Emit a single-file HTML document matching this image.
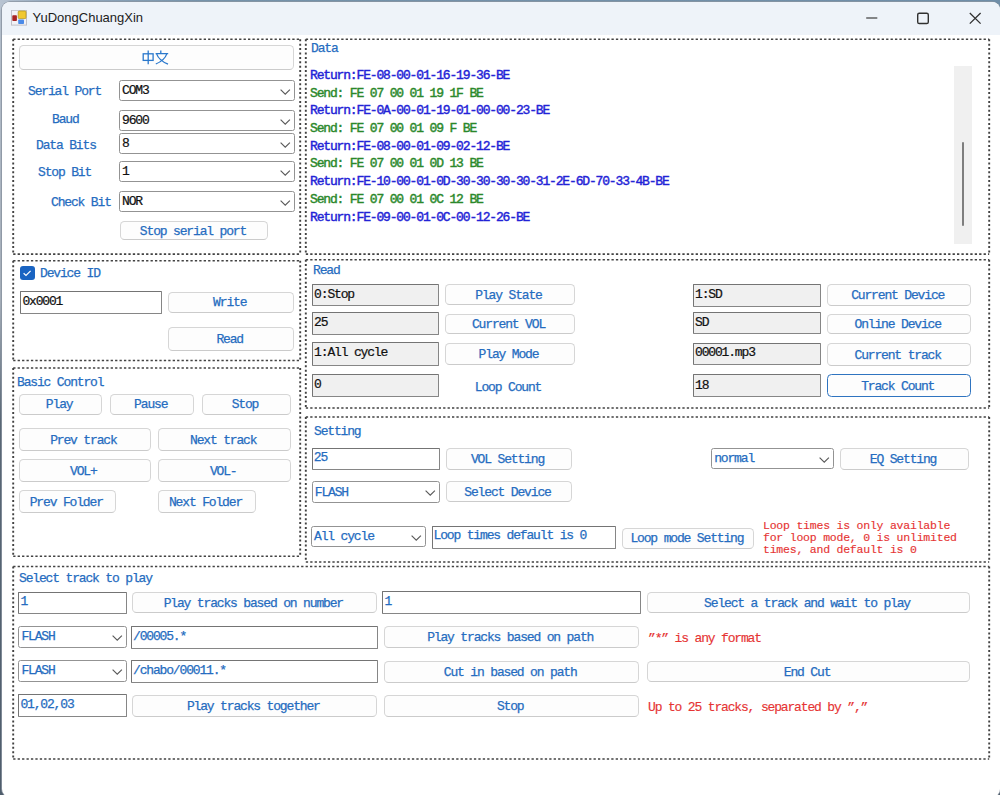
<!DOCTYPE html>
<html><head><meta charset="utf-8"><style>
html,body{margin:0;padding:0;width:1000px;height:795px;overflow:hidden;background:linear-gradient(180deg,#b4bfcc 0,#a4adb8 300px,#5a6876 420px,#4f5d6c 795px);}
#topbg{position:absolute;left:0;top:0;width:1000px;height:10px;background:linear-gradient(90deg,#b8c4d2 0,#98acc0 40px,#7592aa 200px,#6f8ea8 100%);}
#win{position:absolute;left:1.6px;top:1.8px;width:998.4px;height:795.2px;background:#fff;border-radius:8px;overflow:hidden;box-shadow:0 0 0 0.8px #8a94a0;}
#title{position:absolute;left:0;top:0;width:100%;height:33.4px;background:#eef3f9;}
.t{position:absolute;white-space:pre;line-height:20px;height:20px;}
.b{position:absolute;box-sizing:border-box;border:1.5px solid #d6d6d6;border-bottom-color:#cbcbcb;border-radius:4.5px;background:#fdfdfd;}
.b.f{border:1.5px solid #2f74c0;}
.c{position:absolute;box-sizing:border-box;border:1.5px solid #939393;border-radius:2.5px;background:#fff;}
.x{position:absolute;box-sizing:border-box;border:1.5px solid #868686;border-top-color:#747474;border-left-color:#747474;border-radius:1px;}
.chev{position:absolute;}
.chk{position:absolute;width:14.4px;height:13.7px;background:#1a64c2;border-radius:3px;}
</style></head><body>
<div id="topbg"></div>
<div id="win">
 <div id="title"></div>
</div>
<div style="position:absolute;left:0;top:0;width:1000px;height:795px">
<svg style="position:absolute;left:11px;top:10px" width="16" height="16">
 <rect x="0.5" y="0.3" width="15" height="14.8" fill="#f2f2f6" stroke="#c0c0c8"/>
 <rect x="1.3" y="5.2" width="4.6" height="5.8" rx="0.8" fill="#a82424"/>
 <rect x="7.2" y="1" width="7.8" height="7.6" rx="1" fill="#f0c830" stroke="#b89820" stroke-width="0.8"/>
 <rect x="7.2" y="9.6" width="5.8" height="4.4" rx="0.8" fill="#4a8ae8"/>
</svg>
<div class="t" style="left:32.5px;top:8px;font-family:'Liberation Sans',sans-serif;font-size:13px;color:#1c1c1c;">YuDongChuangXin</div>
<svg style="position:absolute;left:865px;top:10px" width="120" height="18">
 <path d="M1.2 8 H12.3" stroke="#4a4a4a" stroke-width="1.3"/>
 <rect x="52.7" y="3.2" width="10.6" height="10.3" rx="1.6" fill="none" stroke="#303030" stroke-width="1.4"/>
 <path d="M104.8 3 L115.6 13.6 M115.6 3 L104.8 13.6" stroke="#303030" stroke-width="1.3"/>
</svg>
<svg style="position:absolute;left:0;top:0" width="1000" height="795"><g fill="none" stroke="#424242" stroke-width="1.55" stroke-dasharray="2.3 2.13"><path d="M13.2 39.3 H300.2 M13.2 254.1 H300.2"/><path d="M305.8 39.3 H989.2 M305.8 254.1 H989.2"/><path d="M13.2 260.8 H300.2 M13.2 360.4 H300.2"/><path d="M305.8 259.7 H989.2 M305.8 408 H989.2"/><path d="M13.2 368 H300.2 M13.2 556.3 H300.2"/><path d="M305.8 417 H989.2 M305.8 562 H989.2"/><path d="M13.2 566.4 H989.2 M13.2 759 H989.2"/></g><g fill="none" stroke="#424242" stroke-width="1.9" stroke-dasharray="2.0 2.4"><path d="M13.2 39.3 V254.1 M300.2 39.3 V254.1"/><path d="M305.8 39.3 V254.1 M989.2 39.3 V254.1"/><path d="M13.2 260.8 V360.4 M300.2 260.8 V360.4"/><path d="M305.8 259.7 V408 M989.2 259.7 V408"/><path d="M13.2 368 V556.3 M300.2 368 V556.3"/><path d="M305.8 417 V562 M989.2 417 V562"/><path d="M13.2 566.4 V759 M989.2 566.4 V759"/></g></svg>
<div class="b" style="left:19px;top:45.2px;width:275px;height:24.89999999999999px"></div>
<div class="t" style="top:48.87px;font-size:13.0px;letter-spacing:-1.16px;color:#256cc0;font-family:'Liberation Mono',monospace;-webkit-text-stroke:0.25px #256cc0;left:-144.80px;width:600px;text-align:center;"></div>
<div class="c" style="left:119px;top:80px;width:176px;height:21.400000000000006px"></div>
<svg class="chev" style="left:280px;top:89.10000000000001px" width="11" height="7"><path d="M0.6 0.6 L5.25 5.25 L9.9 0.6" fill="none" stroke="#5a5a5a" stroke-width="1.15"/></svg>
<div class="t" style="top:81.12px;font-size:13.0px;letter-spacing:-1.16px;color:#111;font-family:'Liberation Mono',monospace;-webkit-text-stroke:0.22px #111;left:122.00px;">COM3</div>
<div class="c" style="left:119px;top:110px;width:176px;height:21px"></div>
<svg class="chev" style="left:280px;top:118.9px" width="11" height="7"><path d="M0.6 0.6 L5.25 5.25 L9.9 0.6" fill="none" stroke="#5a5a5a" stroke-width="1.15"/></svg>
<div class="t" style="top:110.92px;font-size:13.0px;letter-spacing:-1.16px;color:#111;font-family:'Liberation Mono',monospace;-webkit-text-stroke:0.22px #111;left:122.00px;">9600</div>
<div class="c" style="left:119px;top:133px;width:176px;height:21px"></div>
<svg class="chev" style="left:280px;top:141.9px" width="11" height="7"><path d="M0.6 0.6 L5.25 5.25 L9.9 0.6" fill="none" stroke="#5a5a5a" stroke-width="1.15"/></svg>
<div class="t" style="top:133.92px;font-size:13.0px;letter-spacing:-1.16px;color:#111;font-family:'Liberation Mono',monospace;-webkit-text-stroke:0.22px #111;left:122.00px;">8</div>
<div class="c" style="left:119px;top:161px;width:176px;height:21px"></div>
<svg class="chev" style="left:280px;top:169.9px" width="11" height="7"><path d="M0.6 0.6 L5.25 5.25 L9.9 0.6" fill="none" stroke="#5a5a5a" stroke-width="1.15"/></svg>
<div class="t" style="top:161.92px;font-size:13.0px;letter-spacing:-1.16px;color:#111;font-family:'Liberation Mono',monospace;-webkit-text-stroke:0.22px #111;left:122.00px;">1</div>
<div class="c" style="left:119px;top:191px;width:176px;height:21px"></div>
<svg class="chev" style="left:280px;top:199.9px" width="11" height="7"><path d="M0.6 0.6 L5.25 5.25 L9.9 0.6" fill="none" stroke="#5a5a5a" stroke-width="1.15"/></svg>
<div class="t" style="top:191.92px;font-size:13.0px;letter-spacing:-1.16px;color:#111;font-family:'Liberation Mono',monospace;-webkit-text-stroke:0.22px #111;left:122.00px;">NOR</div>
<div class="t" style="top:81.62px;font-size:13.0px;letter-spacing:-1.16px;color:#256cc0;font-family:'Liberation Mono',monospace;-webkit-text-stroke:0.25px #256cc0;left:28.00px;">Serial Port</div>
<div class="t" style="top:109.62px;font-size:13.0px;letter-spacing:-1.16px;color:#256cc0;font-family:'Liberation Mono',monospace;-webkit-text-stroke:0.25px #256cc0;left:52.00px;">Baud</div>
<div class="t" style="top:135.62px;font-size:13.0px;letter-spacing:-1.16px;color:#256cc0;font-family:'Liberation Mono',monospace;-webkit-text-stroke:0.25px #256cc0;left:36.00px;">Data Bits</div>
<div class="t" style="top:162.62px;font-size:13.0px;letter-spacing:-1.16px;color:#256cc0;font-family:'Liberation Mono',monospace;-webkit-text-stroke:0.25px #256cc0;left:38.00px;">Stop Bit</div>
<div class="t" style="top:192.62px;font-size:13.0px;letter-spacing:-1.16px;color:#256cc0;font-family:'Liberation Mono',monospace;-webkit-text-stroke:0.25px #256cc0;left:51.00px;">Check Bit</div>
<div class="b" style="left:120.4px;top:220.8px;width:147.79999999999998px;height:19.19999999999999px"></div>
<div class="t" style="top:221.62px;font-size:13.0px;letter-spacing:-1.16px;color:#256cc0;font-family:'Liberation Mono',monospace;-webkit-text-stroke:0.25px #256cc0;left:-107.00px;width:600px;text-align:center;">Stop serial port</div>
<div class="t" style="top:38.62px;font-size:13.0px;letter-spacing:-1.16px;color:#256cc0;font-family:'Liberation Mono',monospace;-webkit-text-stroke:0.25px #256cc0;left:311.00px;">Data</div>
<div class="t" style="top:65.82px;font-size:13.0px;letter-spacing:-1.16px;color:#2222d6;font-family:'Liberation Mono',monospace;-webkit-text-stroke:0.42px #2222d6;left:310.00px;">Return:FE-08-00-01-16-19-36-BE</div>
<div class="t" style="top:83.54px;font-size:13.0px;letter-spacing:-1.16px;color:#2a882a;font-family:'Liberation Mono',monospace;-webkit-text-stroke:0.42px #2a882a;left:310.00px;">Send: FE 07 00 01 19 1F BE</div>
<div class="t" style="top:101.26px;font-size:13.0px;letter-spacing:-1.16px;color:#2222d6;font-family:'Liberation Mono',monospace;-webkit-text-stroke:0.42px #2222d6;left:310.00px;">Return:FE-0A-00-01-19-01-00-00-23-BE</div>
<div class="t" style="top:118.98px;font-size:13.0px;letter-spacing:-1.16px;color:#2a882a;font-family:'Liberation Mono',monospace;-webkit-text-stroke:0.42px #2a882a;left:310.00px;">Send: FE 07 00 01 09 F BE</div>
<div class="t" style="top:136.70px;font-size:13.0px;letter-spacing:-1.16px;color:#2222d6;font-family:'Liberation Mono',monospace;-webkit-text-stroke:0.42px #2222d6;left:310.00px;">Return:FE-08-00-01-09-02-12-BE</div>
<div class="t" style="top:154.42px;font-size:13.0px;letter-spacing:-1.16px;color:#2a882a;font-family:'Liberation Mono',monospace;-webkit-text-stroke:0.42px #2a882a;left:310.00px;">Send: FE 07 00 01 0D 13 BE</div>
<div class="t" style="top:172.14px;font-size:13.0px;letter-spacing:-1.16px;color:#2222d6;font-family:'Liberation Mono',monospace;-webkit-text-stroke:0.42px #2222d6;left:310.00px;">Return:FE-10-00-01-0D-30-30-30-30-31-2E-6D-70-33-4B-BE</div>
<div class="t" style="top:189.86px;font-size:13.0px;letter-spacing:-1.16px;color:#2a882a;font-family:'Liberation Mono',monospace;-webkit-text-stroke:0.42px #2a882a;left:310.00px;">Send: FE 07 00 01 0C 12 BE</div>
<div class="t" style="top:207.58px;font-size:13.0px;letter-spacing:-1.16px;color:#2222d6;font-family:'Liberation Mono',monospace;-webkit-text-stroke:0.42px #2222d6;left:310.00px;">Return:FE-09-00-01-0C-00-12-26-BE</div>
<div style="position:absolute;left:954px;top:65.6px;width:18px;height:178px;background:#f0f0f0"></div>
<div style="position:absolute;left:962px;top:141.8px;width:2.4px;height:84.2px;background:#7e7e7e;border-radius:1.2px"></div>
<div class="chk" style="left:20.4px;top:266.3px"></div>
<svg style="position:absolute;left:20.4px;top:266.3px" width="14" height="14"><path d="M3.6 7.2 L6 9.4 L10.6 4.8" fill="none" stroke="#fff" stroke-width="1.2"/></svg>
<div class="t" style="top:263.62px;font-size:13.0px;letter-spacing:-1.16px;color:#256cc0;font-family:'Liberation Mono',monospace;-webkit-text-stroke:0.25px #256cc0;left:40.00px;">Device ID</div>
<div class="x" style="left:20.4px;top:291.3px;width:141.29999999999998px;height:23.0px;background:#fff"></div>
<div class="t" style="top:291.82px;font-size:13.0px;letter-spacing:-1.16px;color:#111;font-family:'Liberation Mono',monospace;-webkit-text-stroke:0.22px #111;left:22.40px;">0x0001</div>
<div class="b" style="left:168px;top:291.5px;width:126px;height:21.5px"></div>
<div class="t" style="top:293.47px;font-size:13.0px;letter-spacing:-1.16px;color:#256cc0;font-family:'Liberation Mono',monospace;-webkit-text-stroke:0.25px #256cc0;left:-70.30px;width:600px;text-align:center;">Write</div>
<div class="b" style="left:168px;top:327px;width:126px;height:23.5px"></div>
<div class="t" style="top:329.97px;font-size:13.0px;letter-spacing:-1.16px;color:#256cc0;font-family:'Liberation Mono',monospace;-webkit-text-stroke:0.25px #256cc0;left:-70.30px;width:600px;text-align:center;">Read</div>
<div class="t" style="top:372.62px;font-size:13.0px;letter-spacing:-1.16px;color:#256cc0;font-family:'Liberation Mono',monospace;-webkit-text-stroke:0.25px #256cc0;left:17.00px;">Basic Control</div>
<div class="b" style="left:18.7px;top:393.5px;width:83.5px;height:21.0px"></div>
<div class="t" style="top:395.22px;font-size:13.0px;letter-spacing:-1.16px;color:#256cc0;font-family:'Liberation Mono',monospace;-webkit-text-stroke:0.25px #256cc0;left:-240.85px;width:600px;text-align:center;">Play</div>
<div class="b" style="left:110px;top:393.5px;width:84px;height:21.0px"></div>
<div class="t" style="top:395.22px;font-size:13.0px;letter-spacing:-1.16px;color:#256cc0;font-family:'Liberation Mono',monospace;-webkit-text-stroke:0.25px #256cc0;left:-149.30px;width:600px;text-align:center;">Pause</div>
<div class="b" style="left:202px;top:393.5px;width:88.5px;height:21.0px"></div>
<div class="t" style="top:395.22px;font-size:13.0px;letter-spacing:-1.16px;color:#256cc0;font-family:'Liberation Mono',monospace;-webkit-text-stroke:0.25px #256cc0;left:-55.05px;width:600px;text-align:center;">Stop</div>
<div class="b" style="left:18.7px;top:428.1px;width:131.9px;height:23.19999999999999px"></div>
<div class="t" style="top:430.92px;font-size:13.0px;letter-spacing:-1.16px;color:#256cc0;font-family:'Liberation Mono',monospace;-webkit-text-stroke:0.25px #256cc0;left:-216.65px;width:600px;text-align:center;">Prev track</div>
<div class="b" style="left:157.8px;top:428.1px;width:133.39999999999998px;height:23.19999999999999px"></div>
<div class="t" style="top:430.92px;font-size:13.0px;letter-spacing:-1.16px;color:#256cc0;font-family:'Liberation Mono',monospace;-webkit-text-stroke:0.25px #256cc0;left:-76.80px;width:600px;text-align:center;">Next track</div>
<div class="b" style="left:18.7px;top:459.1px;width:131.9px;height:23.19999999999999px"></div>
<div class="t" style="top:461.92px;font-size:13.0px;letter-spacing:-1.16px;color:#256cc0;font-family:'Liberation Mono',monospace;-webkit-text-stroke:0.25px #256cc0;left:-216.65px;width:600px;text-align:center;">VOL+</div>
<div class="b" style="left:157.8px;top:459.1px;width:133.39999999999998px;height:23.19999999999999px"></div>
<div class="t" style="top:461.92px;font-size:13.0px;letter-spacing:-1.16px;color:#256cc0;font-family:'Liberation Mono',monospace;-webkit-text-stroke:0.25px #256cc0;left:-76.80px;width:600px;text-align:center;">VOL-</div>
<div class="b" style="left:18.7px;top:489.6px;width:97.7px;height:23.699999999999932px"></div>
<div class="t" style="top:492.67px;font-size:13.0px;letter-spacing:-1.16px;color:#256cc0;font-family:'Liberation Mono',monospace;-webkit-text-stroke:0.25px #256cc0;left:-233.75px;width:600px;text-align:center;">Prev Folder</div>
<div class="b" style="left:157.8px;top:489.6px;width:98.0px;height:23.699999999999932px"></div>
<div class="t" style="top:492.67px;font-size:13.0px;letter-spacing:-1.16px;color:#256cc0;font-family:'Liberation Mono',monospace;-webkit-text-stroke:0.25px #256cc0;left:-94.50px;width:600px;text-align:center;">Next Folder</div>
<div class="t" style="top:260.62px;font-size:13.0px;letter-spacing:-1.16px;color:#256cc0;font-family:'Liberation Mono',monospace;-webkit-text-stroke:0.25px #256cc0;left:313.00px;">Read</div>
<div class="x" style="left:312.1px;top:283.5px;width:126.89999999999998px;height:22.80000000000001px;background:#f0f0f0"></div>
<div class="t" style="top:284.82px;font-size:13.0px;letter-spacing:-1.16px;color:#111;font-family:'Liberation Mono',monospace;-webkit-text-stroke:0.22px #111;left:314.10px;">0:Stop</div>
<div class="x" style="left:312.1px;top:312px;width:126.89999999999998px;height:23.399999999999977px;background:#f0f0f0"></div>
<div class="t" style="top:313.12px;font-size:13.0px;letter-spacing:-1.16px;color:#111;font-family:'Liberation Mono',monospace;-webkit-text-stroke:0.22px #111;left:314.10px;">25</div>
<div class="x" style="left:312.1px;top:342.2px;width:126.89999999999998px;height:23.400000000000034px;background:#f0f0f0"></div>
<div class="t" style="top:343.12px;font-size:13.0px;letter-spacing:-1.16px;color:#111;font-family:'Liberation Mono',monospace;-webkit-text-stroke:0.22px #111;left:314.10px;">1:All cycle</div>
<div class="x" style="left:312.1px;top:374.1px;width:126.89999999999998px;height:23.399999999999977px;background:#f0f0f0"></div>
<div class="t" style="top:374.92px;font-size:13.0px;letter-spacing:-1.16px;color:#111;font-family:'Liberation Mono',monospace;-webkit-text-stroke:0.22px #111;left:314.10px;">0</div>
<div class="b" style="left:444.6px;top:284.1px;width:130.39999999999998px;height:21.399999999999977px"></div>
<div class="t" style="top:286.02px;font-size:13.0px;letter-spacing:-1.16px;color:#256cc0;font-family:'Liberation Mono',monospace;-webkit-text-stroke:0.25px #256cc0;left:208.50px;width:600px;text-align:center;">Play State</div>
<div class="b" style="left:444.6px;top:313.5px;width:130.39999999999998px;height:20.100000000000023px"></div>
<div class="t" style="top:314.77px;font-size:13.0px;letter-spacing:-1.16px;color:#256cc0;font-family:'Liberation Mono',monospace;-webkit-text-stroke:0.25px #256cc0;left:208.50px;width:600px;text-align:center;">Current VOL</div>
<div class="b" style="left:444.6px;top:343.4px;width:130.39999999999998px;height:21.400000000000034px"></div>
<div class="t" style="top:345.32px;font-size:13.0px;letter-spacing:-1.16px;color:#256cc0;font-family:'Liberation Mono',monospace;-webkit-text-stroke:0.25px #256cc0;left:208.50px;width:600px;text-align:center;">Play Mode</div>
<div class="t" style="top:377.62px;font-size:13.0px;letter-spacing:-1.16px;color:#256cc0;font-family:'Liberation Mono',monospace;-webkit-text-stroke:0.25px #256cc0;left:208.00px;width:600px;text-align:center;">Loop Count</div>
<div class="x" style="left:693px;top:283.7px;width:128px;height:22.900000000000034px;background:#f0f0f0"></div>
<div class="t" style="top:285.12px;font-size:13.0px;letter-spacing:-1.16px;color:#111;font-family:'Liberation Mono',monospace;-webkit-text-stroke:0.22px #111;left:695.00px;">1:SD</div>
<div class="x" style="left:693px;top:311.6px;width:128px;height:22.399999999999977px;background:#f0f0f0"></div>
<div class="t" style="top:312.62px;font-size:13.0px;letter-spacing:-1.16px;color:#111;font-family:'Liberation Mono',monospace;-webkit-text-stroke:0.22px #111;left:695.00px;">SD</div>
<div class="x" style="left:693px;top:342.6px;width:128px;height:22.899999999999977px;background:#f0f0f0"></div>
<div class="t" style="top:343.12px;font-size:13.0px;letter-spacing:-1.16px;color:#111;font-family:'Liberation Mono',monospace;-webkit-text-stroke:0.22px #111;left:695.00px;">00001.mp3</div>
<div class="x" style="left:693px;top:374.2px;width:128px;height:23.19999999999999px;background:#f0f0f0"></div>
<div class="t" style="top:375.82px;font-size:13.0px;letter-spacing:-1.16px;color:#111;font-family:'Liberation Mono',monospace;-webkit-text-stroke:0.22px #111;left:695.00px;">18</div>
<div class="b" style="left:827.2px;top:284.3px;width:143.5999999999999px;height:21.30000000000001px"></div>
<div class="t" style="top:286.17px;font-size:13.0px;letter-spacing:-1.16px;color:#256cc0;font-family:'Liberation Mono',monospace;-webkit-text-stroke:0.25px #256cc0;left:597.70px;width:600px;text-align:center;">Current Device</div>
<div class="b" style="left:827.2px;top:313.5px;width:143.5999999999999px;height:20.30000000000001px"></div>
<div class="t" style="top:314.87px;font-size:13.0px;letter-spacing:-1.16px;color:#256cc0;font-family:'Liberation Mono',monospace;-webkit-text-stroke:0.25px #256cc0;left:597.70px;width:600px;text-align:center;">Online Device</div>
<div class="b" style="left:827.2px;top:343.2px;width:143.5999999999999px;height:23.19999999999999px"></div>
<div class="t" style="top:346.02px;font-size:13.0px;letter-spacing:-1.16px;color:#256cc0;font-family:'Liberation Mono',monospace;-webkit-text-stroke:0.25px #256cc0;left:597.70px;width:600px;text-align:center;">Current track</div>
<div class="b f" style="left:827.2px;top:374.4px;width:143.5999999999999px;height:23.0px"></div>
<div class="t" style="top:377.12px;font-size:13.0px;letter-spacing:-1.16px;color:#256cc0;font-family:'Liberation Mono',monospace;-webkit-text-stroke:0.25px #256cc0;left:597.70px;width:600px;text-align:center;">Track Count</div>
<div class="t" style="top:421.62px;font-size:13.0px;letter-spacing:-1.16px;color:#256cc0;font-family:'Liberation Mono',monospace;-webkit-text-stroke:0.25px #256cc0;left:314.00px;">Setting</div>
<div class="x" style="left:311.8px;top:447.7px;width:127.89999999999998px;height:22.80000000000001px;background:#fff"></div>
<div class="t" style="top:448.22px;font-size:13.0px;letter-spacing:-1.16px;color:#256cc0;font-family:'Liberation Mono',monospace;-webkit-text-stroke:0.25px #256cc0;left:313.80px;">25</div>
<div class="b" style="left:446px;top:447.8px;width:125.60000000000002px;height:22.0px"></div>
<div class="t" style="top:450.02px;font-size:13.0px;letter-spacing:-1.16px;color:#256cc0;font-family:'Liberation Mono',monospace;-webkit-text-stroke:0.25px #256cc0;left:207.50px;width:600px;text-align:center;">VOL Setting</div>
<div class="c" style="left:711.2px;top:447.8px;width:123.0px;height:21.599999999999966px"></div>
<svg class="chev" style="left:819.2px;top:457.0px" width="11" height="7"><path d="M0.6 0.6 L5.25 5.25 L9.9 0.6" fill="none" stroke="#5a5a5a" stroke-width="1.15"/></svg>
<div class="t" style="top:449.22px;font-size:13.0px;letter-spacing:-1.16px;color:#256cc0;font-family:'Liberation Mono',monospace;-webkit-text-stroke:0.25px #256cc0;left:714.20px;">normal</div>
<div class="b" style="left:840px;top:448.2px;width:128.60000000000002px;height:21.400000000000034px"></div>
<div class="t" style="top:450.12px;font-size:13.0px;letter-spacing:-1.16px;color:#256cc0;font-family:'Liberation Mono',monospace;-webkit-text-stroke:0.25px #256cc0;left:603.00px;width:600px;text-align:center;">EQ Setting</div>
<div class="c" style="left:311.8px;top:481px;width:127.89999999999998px;height:21.5px"></div>
<svg class="chev" style="left:424.7px;top:490.15px" width="11" height="7"><path d="M0.6 0.6 L5.25 5.25 L9.9 0.6" fill="none" stroke="#5a5a5a" stroke-width="1.15"/></svg>
<div class="t" style="top:482.52px;font-size:13.0px;letter-spacing:-1.16px;color:#256cc0;font-family:'Liberation Mono',monospace;-webkit-text-stroke:0.25px #256cc0;left:314.80px;">FLASH</div>
<div class="b" style="left:446px;top:481px;width:125.60000000000002px;height:21.399999999999977px"></div>
<div class="t" style="top:482.92px;font-size:13.0px;letter-spacing:-1.16px;color:#256cc0;font-family:'Liberation Mono',monospace;-webkit-text-stroke:0.25px #256cc0;left:207.50px;width:600px;text-align:center;">Select Device</div>
<div class="c" style="left:311px;top:526px;width:115px;height:21px"></div>
<svg class="chev" style="left:411px;top:534.9px" width="11" height="7"><path d="M0.6 0.6 L5.25 5.25 L9.9 0.6" fill="none" stroke="#5a5a5a" stroke-width="1.15"/></svg>
<div class="t" style="top:526.92px;font-size:13.0px;letter-spacing:-1.16px;color:#256cc0;font-family:'Liberation Mono',monospace;-webkit-text-stroke:0.25px #256cc0;left:314.00px;">All cycle</div>
<div class="x" style="left:431.5px;top:526.4px;width:184.5px;height:22.600000000000023px;background:#fff"></div>
<div class="t" style="top:525.82px;font-size:13.0px;letter-spacing:-1.16px;color:#256cc0;font-family:'Liberation Mono',monospace;-webkit-text-stroke:0.25px #256cc0;left:433.50px;">Loop times default is 0</div>
<div class="b" style="left:622.2px;top:527.6px;width:132.0px;height:21.0px"></div>
<div class="t" style="top:529.32px;font-size:13.0px;letter-spacing:-1.16px;color:#256cc0;font-family:'Liberation Mono',monospace;-webkit-text-stroke:0.25px #256cc0;left:386.90px;width:600px;text-align:center;">Loop mode Setting</div>
<div class="t" style="top:515.93px;font-size:11.5px;letter-spacing:-0.22px;color:#e63434;font-family:'Liberation Mono',monospace;-webkit-text-stroke:0.15px #e63434;left:763.00px;">Loop times is only available</div>
<div class="t" style="top:527.93px;font-size:11.5px;letter-spacing:-0.22px;color:#e63434;font-family:'Liberation Mono',monospace;-webkit-text-stroke:0.15px #e63434;left:763.00px;">for loop mode, 0 is unlimited</div>
<div class="t" style="top:539.93px;font-size:11.5px;letter-spacing:-0.22px;color:#e63434;font-family:'Liberation Mono',monospace;-webkit-text-stroke:0.15px #e63434;left:763.00px;">times, and default is 0</div>
<div class="t" style="top:568.62px;font-size:13.0px;letter-spacing:-1.16px;color:#256cc0;font-family:'Liberation Mono',monospace;-webkit-text-stroke:0.25px #256cc0;left:19.00px;">Select track to play</div>
<div class="x" style="left:18.4px;top:591.6px;width:108.19999999999999px;height:22.799999999999955px;background:#fff"></div>
<div class="t" style="top:592.22px;font-size:13.0px;letter-spacing:-1.16px;color:#256cc0;font-family:'Liberation Mono',monospace;-webkit-text-stroke:0.25px #256cc0;left:20.40px;">1</div>
<div class="b" style="left:132.4px;top:592.4px;width:244.4px;height:20.800000000000068px"></div>
<div class="t" style="top:594.02px;font-size:13.0px;letter-spacing:-1.16px;color:#256cc0;font-family:'Liberation Mono',monospace;-webkit-text-stroke:0.25px #256cc0;left:-46.70px;width:600px;text-align:center;">Play tracks based on number</div>
<div class="x" style="left:382.4px;top:591.4px;width:258.6px;height:23.0px;background:#fff"></div>
<div class="t" style="top:592.22px;font-size:13.0px;letter-spacing:-1.16px;color:#256cc0;font-family:'Liberation Mono',monospace;-webkit-text-stroke:0.25px #256cc0;left:384.40px;">1</div>
<div class="b" style="left:646.5px;top:591.8px;width:323.70000000000005px;height:21.40000000000009px"></div>
<div class="t" style="top:593.72px;font-size:13.0px;letter-spacing:-1.16px;color:#256cc0;font-family:'Liberation Mono',monospace;-webkit-text-stroke:0.25px #256cc0;left:507.05px;width:600px;text-align:center;">Select a track and wait to play</div>
<div class="c" style="left:18.4px;top:626.4px;width:108.19999999999999px;height:21.200000000000045px"></div>
<svg class="chev" style="left:111.6px;top:635.4px" width="11" height="7"><path d="M0.6 0.6 L5.25 5.25 L9.9 0.6" fill="none" stroke="#5a5a5a" stroke-width="1.15"/></svg>
<div class="t" style="top:627.42px;font-size:13.0px;letter-spacing:-1.16px;color:#256cc0;font-family:'Liberation Mono',monospace;-webkit-text-stroke:0.25px #256cc0;left:21.40px;">FLASH</div>
<div class="x" style="left:131px;top:626.4px;width:247px;height:22.200000000000045px;background:#fff"></div>
<div class="t" style="top:626.62px;font-size:13.0px;letter-spacing:-1.16px;color:#256cc0;font-family:'Liberation Mono',monospace;-webkit-text-stroke:0.25px #256cc0;left:133.00px;">/00005.*</div>
<div class="b" style="left:384px;top:626px;width:255px;height:22px"></div>
<div class="t" style="top:628.22px;font-size:13.0px;letter-spacing:-1.16px;color:#256cc0;font-family:'Liberation Mono',monospace;-webkit-text-stroke:0.25px #256cc0;left:210.20px;width:600px;text-align:center;">Play tracks based on path</div>
<div class="t" style="top:628.62px;font-size:13.0px;letter-spacing:-1.16px;color:#e63434;font-family:'Liberation Mono',monospace;-webkit-text-stroke:0.15px #e63434;left:648.00px;">”*” is any format</div>
<div class="c" style="left:18.4px;top:660.4px;width:108.19999999999999px;height:21.200000000000045px"></div>
<svg class="chev" style="left:111.6px;top:669.4px" width="11" height="7"><path d="M0.6 0.6 L5.25 5.25 L9.9 0.6" fill="none" stroke="#5a5a5a" stroke-width="1.15"/></svg>
<div class="t" style="top:661.42px;font-size:13.0px;letter-spacing:-1.16px;color:#256cc0;font-family:'Liberation Mono',monospace;-webkit-text-stroke:0.25px #256cc0;left:21.40px;">FLASH</div>
<div class="x" style="left:131px;top:660.4px;width:247px;height:22.600000000000023px;background:#fff"></div>
<div class="t" style="top:660.62px;font-size:13.0px;letter-spacing:-1.16px;color:#256cc0;font-family:'Liberation Mono',monospace;-webkit-text-stroke:0.25px #256cc0;left:133.00px;">/chabo/00011.*</div>
<div class="b" style="left:384px;top:660.5px;width:255px;height:22.100000000000023px"></div>
<div class="t" style="top:662.77px;font-size:13.0px;letter-spacing:-1.16px;color:#256cc0;font-family:'Liberation Mono',monospace;-webkit-text-stroke:0.25px #256cc0;left:210.20px;width:600px;text-align:center;">Cut in based on path</div>
<div class="b" style="left:646.5px;top:660.5px;width:323.70000000000005px;height:21.899999999999977px"></div>
<div class="t" style="top:662.67px;font-size:13.0px;letter-spacing:-1.16px;color:#256cc0;font-family:'Liberation Mono',monospace;-webkit-text-stroke:0.25px #256cc0;left:507.05px;width:600px;text-align:center;">End Cut</div>
<div class="x" style="left:18.4px;top:694.4px;width:108.19999999999999px;height:22.600000000000023px;background:#fff"></div>
<div class="t" style="top:694.82px;font-size:13.0px;letter-spacing:-1.16px;color:#256cc0;font-family:'Liberation Mono',monospace;-webkit-text-stroke:0.25px #256cc0;left:20.40px;">01,02,03</div>
<div class="b" style="left:132.4px;top:695px;width:244.4px;height:22.200000000000045px"></div>
<div class="t" style="top:697.32px;font-size:13.0px;letter-spacing:-1.16px;color:#256cc0;font-family:'Liberation Mono',monospace;-webkit-text-stroke:0.25px #256cc0;left:-46.70px;width:600px;text-align:center;">Play tracks together</div>
<div class="b" style="left:384px;top:694.8px;width:255px;height:22.40000000000009px"></div>
<div class="t" style="top:697.22px;font-size:13.0px;letter-spacing:-1.16px;color:#256cc0;font-family:'Liberation Mono',monospace;-webkit-text-stroke:0.25px #256cc0;left:210.20px;width:600px;text-align:center;">Stop</div>
<div class="t" style="top:697.62px;font-size:13.0px;letter-spacing:-1.16px;color:#e63434;font-family:'Liberation Mono',monospace;-webkit-text-stroke:0.15px #e63434;left:648.00px;">Up to 25 tracks, separated by ”,”</div>
<svg style="position:absolute;left:141px;top:49px" width="30" height="18"><g fill="none" stroke="#2a78cc" stroke-width="1.3">
 <rect x="2.2" y="4.8" width="9.9" height="6.6"/><path d="M7.2 1.6 V15.2"/>
 <path d="M19.8 1.6 V4.2 M14.6 4.6 H27.2 M25.8 4.9 Q23.5 11.5 14.8 15 M15.6 4.9 Q18 11.5 27 15.2"/>
</g></svg>
</div>
</body></html>
